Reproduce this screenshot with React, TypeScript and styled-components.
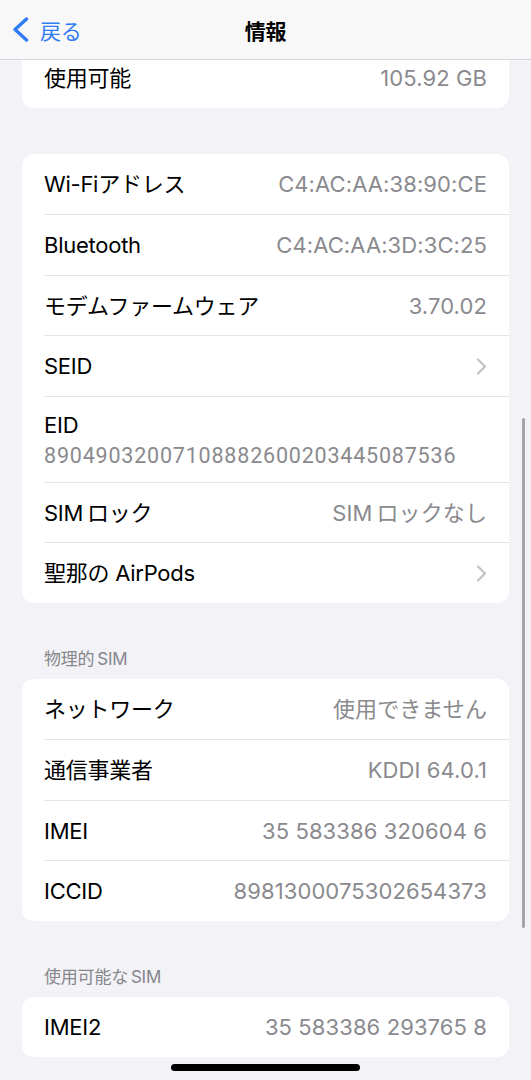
import React from "react";
import styled, { createGlobalStyle } from "styled-components";

const GlobalStyle = createGlobalStyle`
  html, body { margin: 0; padding: 0; background: #f2f2f7; }
  body {
    font-family: Inter, "Noto Sans CJK JP", "Noto Sans", sans-serif;
    -webkit-font-smoothing: antialiased;
  }
  * { box-sizing: border-box; }
`;

const Screen = styled.div`
  position: relative;
  width: 531px;
  height: 1080px;
  overflow: hidden;
  background: #f2f2f7;
`;

const NavBar = styled.header`
  position: relative;
  z-index: 2;
  height: 60px;
  display: grid;
  grid-template-columns: 1fr auto 1fr;
  align-items: center;
  background: #f8f8f8;
  border-bottom: 1px solid #d6d6da;
`;

const BackButton = styled.div`
  display: flex;
  align-items: center;
  gap: 11px;
  padding-left: 12px;
  color: #2f7cf6;
  font-size: 21px;
  letter-spacing: -0.3px;
`;

const Title = styled.h1`
  margin: 0;
  font-size: 21px;
  font-weight: 700;
  color: #000;
  letter-spacing: -0.3px;
`;

const Content = styled.main`
  position: relative;
  z-index: 1;
  margin-top: -13px;
  padding: 0 22px;
  display: flex;
  flex-direction: column;
`;

const Card = styled.section<{ $gap?: number }>`
  margin-top: ${(p) => p.$gap ?? 0}px;
  background: #fff;
  border-radius: 12px;
  overflow: hidden;
`;

const Row = styled.div`
  height: 60.5px;
  margin-left: 22px;
  padding: 2px 22px 0 0;
  display: flex;
  align-items: center;
  justify-content: space-between;
  & + & {
    border-top: 1px solid #e4e4e7;
  }
`;

const StackRow = styled(Row)`
  height: auto;
  padding-top: 13px;
  padding-bottom: 11px;
  flex-direction: column;
  align-items: flex-start;
  justify-content: flex-start;
`;

const Label = styled.span`
  font-size: 22px;
  line-height: 31px;
  color: #000;
  letter-spacing: -0.25px;
  white-space: nowrap;
`;

const Value = styled.span`
  font-size: 22px;
  line-height: 31px;
  color: #8a8a8e;
  letter-spacing: 0.1px;
  white-space: nowrap;
  font-variant-numeric: proportional-nums;
`;

const MonoValue = styled.span`
  font-family: Roboto, "Noto Sans", sans-serif;
  font-size: 21.5px;
  line-height: 30px;
  color: #8a8a8e;
  letter-spacing: 0.8px;
  white-space: nowrap;
`;

const SectionHeader = styled.h2`
  margin: 45px 0 0;
  padding: 0 22px 9px;
  font-size: 17px;
  line-height: 22px;
  font-weight: 400;
  color: #86868b;
  letter-spacing: -0.2px;
`;

const Scrollbar = styled.div`
  position: absolute;
  z-index: 3;
  right: 6px;
  top: 418px;
  width: 3px;
  height: 510px;
  border-radius: 2px;
  background: #a4a4a9;
`;

const HomeIndicator = styled.div`
  position: absolute;
  z-index: 3;
  left: 171px;
  top: 1064px;
  width: 189px;
  height: 7px;
  border-radius: 4px;
  background: #000;
`;

const BackChevron = () => (
  <svg width="17" height="25" viewBox="0 0 17 25" fill="none">
    <path
      d="M14.5 2 L3 12.5 L14.5 23"
      stroke="#2f7cf6"
      strokeWidth="3.4"
      strokeLinecap="round"
      strokeLinejoin="round"
    />
  </svg>
);

const Disclosure = () => (
  <svg width="11" height="17" viewBox="0 0 11 17" fill="none">
    <path
      d="M2 1.5 L9 8.5 L2 15.5"
      stroke="#c4c4c7"
      strokeWidth="2.3"
      strokeLinecap="round"
      strokeLinejoin="round"
    />
  </svg>
);

type Item = { label: string; value?: string; chevron?: boolean };

const InfoRow = ({ label, value, chevron }: Item) => (
  <Row>
    <Label>{label}</Label>
    {chevron ? <Disclosure /> : <Value>{value}</Value>}
  </Row>
);

const networkItems: Item[] = [
  { label: "Wi-Fiアドレス", value: "C4:AC:AA:38:90:CE" },
  { label: "Bluetooth", value: "C4:AC:AA:3D:3C:25" },
  { label: "モデムファームウェア", value: "3.70.02" },
  { label: "SEID", chevron: true },
];

const simItems: Item[] = [
  { label: "ネットワーク", value: "使用できません" },
  { label: "通信事業者", value: "KDDI 64.0.1" },
  { label: "IMEI", value: "35 583386 320604 6" },
  { label: "ICCID", value: "8981300075302654373" },
];

export default function App() {
  return (
    <>
      <GlobalStyle />
      <Screen>
        <NavBar>
          <BackButton>
            <BackChevron />
            <span>戻る</span>
          </BackButton>
          <Title>情報</Title>
          <div />
        </NavBar>
        <Content>
          <Card>
            <InfoRow label="使用可能" value="105.92 GB" />
          </Card>

          <Card $gap={46}>
            {networkItems.map((it) => (
              <InfoRow key={it.label} {...it} />
            ))}
            <StackRow>
              <Label>EID</Label>
              <MonoValue>89049032007108882600203445087536</MonoValue>
            </StackRow>
            <InfoRow label={"SIM\u2009ロック"} value={"SIM\u2009ロックなし"} />
            <InfoRow label="聖那の AirPods" chevron />
          </Card>

          <SectionHeader>{"物理的\u2009SIM"}</SectionHeader>
          <Card>
            {simItems.map((it) => (
              <InfoRow key={it.label} {...it} />
            ))}
          </Card>

          <SectionHeader>{"使用可能な\u2009SIM"}</SectionHeader>
          <Card>
            <InfoRow label="IMEI2" value="35 583386 293765 8" />
          </Card>
        </Content>
        <Scrollbar />
        <HomeIndicator />
      </Screen>
    </>
  );
}
